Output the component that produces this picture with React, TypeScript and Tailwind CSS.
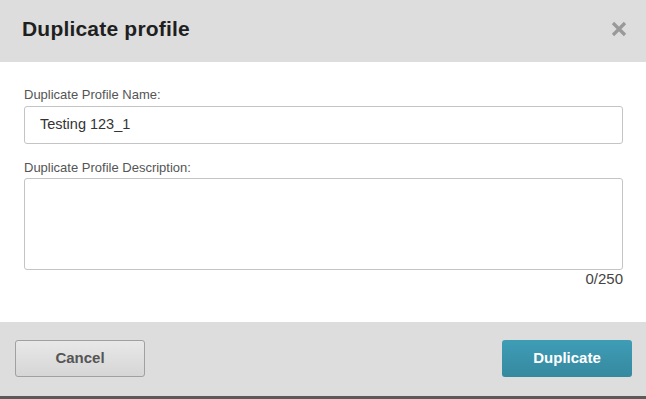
import React from 'react';

export default function App() {
  return (
    <div className="w-[646px] h-[399px] overflow-hidden bg-white flex flex-col font-[family-name:Liberation_Sans,Arial,sans-serif]">
      {/* Header */}
      <div className="h-[62px] shrink-0 bg-[#dddddd] flex items-center justify-between pl-[22px] pr-[19px] pb-[4px]">
        <h1 className="text-[21px] font-bold text-[#1f1f1f] tracking-[0.2px]">Duplicate profile</h1>
        <svg className="w-[16px] h-[16px]" viewBox="0 0 16 16">
          <path d="M2 2 L14 14 M14 2 L2 14" stroke="#999999" strokeWidth={3.2} strokeLinecap="butt" />
        </svg>
      </div>

      {/* Body */}
      <div className="h-[260px] shrink-0 bg-white pl-[24px] pt-[26px]">
        <label className="block text-[13px] text-[#555] leading-[14px] mb-[4px]">Duplicate Profile Name:</label>
        <div className="h-[38px] w-[599px] border border-[#c4c4c4] rounded-[3px] flex items-center px-[15px] text-[14.5px] text-[#333]">
          Testing 123_1
        </div>
        <label className="block text-[13px] text-[#555] leading-[14px] mt-[17px] mb-[3px]">Duplicate Profile Description:</label>
        <div className="h-[92px] w-[599px] border border-[#c4c4c4] rounded-[3px]" />
        <div className="w-[599px] text-right text-[15px] text-[#444] leading-[16px] mt-[1px]">0/250</div>
      </div>

      {/* Footer */}
      <div className="h-[74px] shrink-0 bg-[#dddddd] flex items-center justify-between pl-[15px] pr-[14px] pb-[1px]">
        <button className="w-[130px] h-[37px] rounded-[3px] border border-[#a0a0a0] bg-gradient-to-b from-[#e8e8e8] to-[#d6d6d6] text-[15px] font-bold text-[#555]">
          Cancel
        </button>
        <button className="w-[130px] h-[37px] rounded-[3px] bg-gradient-to-b from-[#3e9db6] to-[#35899f] text-[15px] font-bold text-white">
          Duplicate
        </button>
      </div>

      {/* Page behind */}
      <div className="flex-1 bg-[#5a5a5a]" />
    </div>
  );
}
